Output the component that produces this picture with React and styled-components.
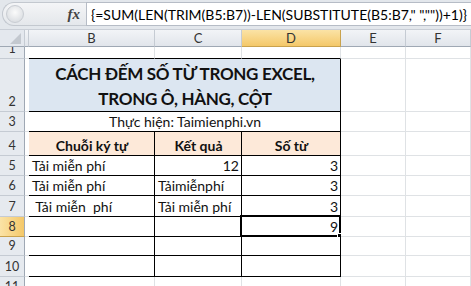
import React from "react";
import styled, { createGlobalStyle } from "styled-components";

const Global = createGlobalStyle`
  html, body { margin: 0; padding: 0; background: #fff; }
  body { font-family: "Lato", "Open Sans", sans-serif; color: #111; overflow: hidden; }
`;

const Wrap = styled.div`
  width: 471px;
  height: 286px;
  overflow: hidden;
  background: #fff;
`;

const FormulaBar = styled.div`
  height: 30px;
  box-sizing: border-box;
  padding: 2px 0 3px 2px;
  display: flex;
  background: #e3e7ec;
  border-bottom: 1px solid #c9ced6;
`;

const NameBox = styled.div`
  width: 84px;
  box-sizing: border-box;
  display: flex;
  align-items: center;
  justify-content: space-between;
  padding: 0 6px 0 3px;
  border: 1px solid #c3c8cf;
  border-right: none;
  border-radius: 12px 0 0 12px;
  background: linear-gradient(#f4f5f7, #e4e7eb);
`;

const Knob = styled.span`
  width: 16px;
  height: 16px;
  border-radius: 50%;
  background: radial-gradient(circle at 50% 40%, #fbfbfb, #d2d6db);
  border: 1px solid #c8ccd2;
`;

const Fx = styled.span`
  font-family: "Liberation Serif", serif;
  font-style: italic;
  font-weight: bold;
  font-size: 15px;
  color: #444;
`;

const FormulaInput = styled.div`
  flex: 1;
  background: #fff;
  border: 1px solid #b6bcc6;
  border-right: none;
  display: flex;
  align-items: center;
  padding-left: 4px;
  font-size: 14px;
  white-space: pre;
  color: #000;
`;

const Sheet = styled.div`
  display: grid;
  grid-template-columns: 25px 4px 126px 87px 99px 65px 65px;
  grid-template-rows: 17px 12px 53px 20px 24px 20px 20px 21px 20px 19px 21px 20px;
`;

const Corner = styled.div`
  position: relative;
  background: #e4e8ee;
  border-right: 1px solid #c5cbd3;
  border-bottom: 1px solid #9fa8b4;
  box-sizing: border-box;
  &::after {
    content: "";
    position: absolute;
    right: 3px;
    bottom: 2px;
    border-style: solid;
    border-width: 0 0 11px 11px;
    border-color: transparent transparent #c3c8cf transparent;
  }
`;

const ColHead = styled.div`
  box-sizing: border-box;
  display: flex;
  align-items: center;
  justify-content: center;
  font-size: 13px;
  color: #333;
  background: ${(p) =>
    p.$active
      ? "linear-gradient(#fbe3a6, #f4c869)"
      : "linear-gradient(#f2f4f7, #e1e5eb)"};
  border-right: 1px solid ${(p) => (p.$active ? "#c9a24d" : "#c5cbd3")};
  border-bottom: 1px solid ${(p) => (p.$active ? "#c9a24d" : "#9fa8b4")};
  overflow: hidden;
`;

const RowHead = styled.div`
  box-sizing: border-box;
  display: flex;
  align-items: flex-end;
  justify-content: center;
  padding-bottom: 2px;
  font-size: 12.5px;
  line-height: 14px;
  color: #333;
  background: ${(p) =>
    p.$active ? "linear-gradient(90deg, #fbe3a6, #f4c869)" : "#e6eaef"};
  border-right: 1px solid #9fa8b4;
  border-bottom: 1px solid ${(p) => (p.$active ? "#c9a24d" : "#c5cbd3")};
  overflow: hidden;
`;

const Cell = styled.div`
  position: relative;
  box-sizing: border-box;
  grid-column: ${(p) => (p.$span ? `span ${p.$span}` : "auto")};
  border-right: 1px solid ${(p) => (p.$r ? "#000" : "#dfe2e5")};
  border-bottom: 1px solid ${(p) => (p.$b ? "#000" : "#dfe2e5")};
  background: ${(p) => p.$bg || "#fff"};
  display: flex;
  align-items: flex-end;
  justify-content: ${(p) =>
    p.$align === "right" ? "flex-end" : p.$align === "center" ? "center" : "flex-start"};
  padding: 0 2px 1px 3px;
  font-size: 14px;
  font-weight: ${(p) => (p.$bold ? 700 : 400)};
  white-space: pre;
`;

const Title = styled(Cell)`
  align-items: center;
  text-align: center;
  font-size: 17px;
  letter-spacing: -0.3px;
  font-weight: 700;
  line-height: 25px;
  padding-top: 3px;
`;

const Selected = styled(Cell)`
  &::before {
    content: "";
    position: absolute;
    left: -2px;
    top: -2px;
    right: -1px;
    bottom: -1px;
    border: 2px solid #000;
  }
  &::after {
    content: "";
    position: absolute;
    right: -4px;
    bottom: -4px;
    width: 5px;
    height: 5px;
    background: #000;
    border: 1px solid #fff;
  }
`;

const rows = [
  { n: 1 },
  { n: 2 },
  { n: 3 },
  { n: 4 },
  { n: 5, b: "Tải miễn phí", c: "12", cAlign: "right", d: "3" },
  { n: 6, b: "Tải miễn phí", c: "Tảimiễnphí", d: "3" },
  { n: 7, b: " Tải miễn  phí", c: "Tải miễn phí", d: "3" },
  { n: 8, d: "9", sel: true },
  { n: 9 },
  { n: 10 },
  { n: 11 },
];

function Row({ r }) {
  const inTable = r.n >= 2 && r.n <= 10;
  const head = <RowHead key="h" $active={r.sel}>{r.n}</RowHead>;
  const colA = <Cell key="a" $r={inTable} />;
  const tail = [<Cell key="e" />, <Cell key="f" />];

  if (r.n === 1 || r.n === 11) {
    const edge = r.n === 1;
    return [
      head,
      colA,
      <Cell key="b" $b={edge} />,
      <Cell key="c" $b={edge} />,
      <Cell key="d" $b={edge} />,
      ...tail,
    ];
  }
  if (r.n === 2) {
    return [
      head,
      colA,
      <Title key="t" $span={3} $r $b $bg="#dce6f1" $align="center">
        {"CÁCH ĐẾM SỐ TỪ TRONG EXCEL,\nTRONG Ô, HÀNG, CỘT"}
      </Title>,
      ...tail,
    ];
  }
  if (r.n === 3) {
    return [
      head,
      colA,
      <Cell key="t" $span={3} $r $b $align="center">
        Thực hiện: Taimienphi.vn
      </Cell>,
      ...tail,
    ];
  }
  if (r.n === 4) {
    return [
      head,
      colA,
      <Cell key="b" $r $b $bold $bg="#fde9d9" $align="center">Chuỗi ký tự</Cell>,
      <Cell key="c" $r $b $bold $bg="#fde9d9" $align="center">Kết quả</Cell>,
      <Cell key="d" $r $b $bold $bg="#fde9d9" $align="center">Số từ</Cell>,
      ...tail,
    ];
  }
  const D = r.sel ? Selected : Cell;
  return [
    head,
    colA,
    <Cell key="b" $r $b>{r.b || ""}</Cell>,
    <Cell key="c" $r $b $align={r.cAlign}>{r.c || ""}</Cell>,
    <D key="d" $r $b $align="right">{r.d || ""}</D>,
    ...tail,
  ];
}

export default function App() {
  return (
    <Wrap>
      <Global />
      <FormulaBar>
        <NameBox>
          <Knob />
          <Fx>fx</Fx>
        </NameBox>
        <FormulaInput>{'{=SUM(LEN(TRIM(B5:B7))-LEN(SUBSTITUTE(B5:B7," ",""))+1)}'}</FormulaInput>
      </FormulaBar>
      <Sheet>
        <Corner />
        <ColHead />
        <ColHead>B</ColHead>
        <ColHead>C</ColHead>
        <ColHead $active>D</ColHead>
        <ColHead>E</ColHead>
        <ColHead>F</ColHead>
        {rows.map((r) => (
          <React.Fragment key={r.n}>{Row({ r })}</React.Fragment>
        ))}
      </Sheet>
    </Wrap>
  );
}
